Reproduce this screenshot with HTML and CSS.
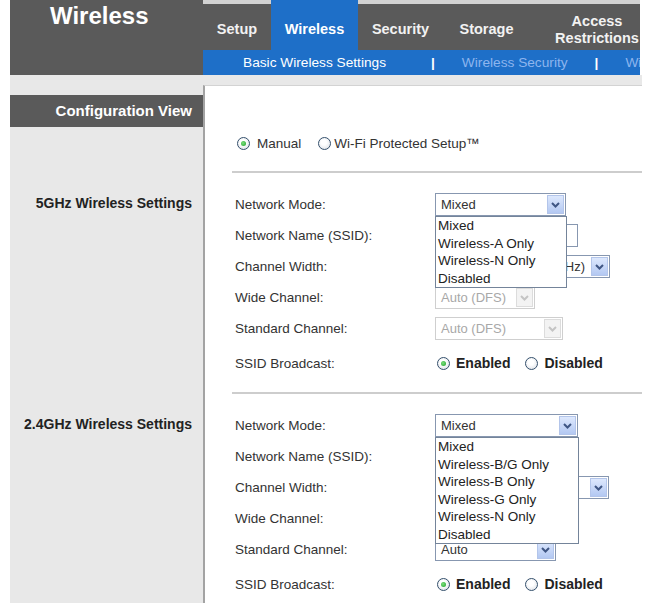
FILE: index.html
```html
<!DOCTYPE html>
<html lang="en">
<head>
<meta charset="utf-8">
<title>Wireless - Basic Wireless Settings</title>
<link rel="stylesheet" href="styles.css">
</head>
<body>
<div class="page">
  <header class="top">
    <div class="brand">Wireless</div>
    <nav class="nav">
      <div class="tabs">
        <div class="tab t-setup">Setup</div>
        <div class="tab t-wireless active">Wireless</div>
        <div class="tab t-security">Security</div>
        <div class="tab t-storage">Storage</div>
        <div class="tab t-access">Access<br>Restrictions</div>
      </div>
      <div class="subnav">
        <span class="sub current">Basic Wireless Settings</span>
        <span class="pipe">|</span>
        <span class="sub">Wireless Security</span>
        <span class="pipe">|</span>
        <span class="sub">Wireless MAC Filter</span>
      </div>
    </nav>
  </header>

  <div class="layout">
    <div class="side side-top"><div class="config">Configuration View</div></div>
    <div class="main main-top">
      <div class="mode-block">
        <div class="mode-row">
          <span class="radio on m-first"></span><span class="mode-text">Manual</span>
          <span class="radio m-second"></span><span class="mode-text wps">Wi-Fi Protected Setup™</span>
        </div>
      </div>
    </div>

    <div class="side"><div class="sec-label">5GHz Wireless Settings</div></div>
    <div class="main">
      <div class="section">
        <div class="row">
          <div class="label">Network Mode:</div>
          <div class="ctl">
            <div class="sel w131"><span class="val">Mixed</span><span class="btn"><svg width="9" height="6" viewBox="0 0 9 6"><path d="M1 1 L4.5 4.5 L8 1" fill="none" stroke="#3f5684" stroke-width="2"/></svg></span></div>
            <div class="list w132">
              <div class="opt">Mixed</div>
              <div class="opt">Wireless-A Only</div>
              <div class="opt">Wireless-N Only</div>
              <div class="opt">Disabled</div>
            </div>
          </div>
        </div>
        <div class="row">
          <div class="label">Network Name (SSID):</div>
          <div class="ctl"><div class="txt w143"></div></div>
        </div>
        <div class="row">
          <div class="label">Channel Width:</div>
          <div class="ctl">
            <div class="sel w175"><span class="val val-end">Auto (20MHz or 40MHz)</span><span class="btn"><svg width="9" height="6" viewBox="0 0 9 6"><path d="M1 1 L4.5 4.5 L8 1" fill="none" stroke="#3f5684" stroke-width="2"/></svg></span></div>
          </div>
        </div>
        <div class="row">
          <div class="label">Wide Channel:</div>
          <div class="ctl">
            <div class="sel dis w100"><span class="val">Auto (DFS)</span><span class="btn"><svg width="9" height="6" viewBox="0 0 9 6"><path d="M1 1 L4.5 4.5 L8 1" fill="none" stroke="#c4c4c4" stroke-width="2"/></svg></span></div>
          </div>
        </div>
        <div class="row">
          <div class="label">Standard Channel:</div>
          <div class="ctl">
            <div class="sel dis w128"><span class="val">Auto (DFS)</span><span class="btn"><svg width="9" height="6" viewBox="0 0 9 6"><path d="M1 1 L4.5 4.5 L8 1" fill="none" stroke="#c4c4c4" stroke-width="2"/></svg></span></div>
          </div>
        </div>
        <div class="row ssid">
          <div class="label">SSID Broadcast:</div>
          <div class="ctl opts">
            <span class="radio on"></span><span class="opt-text">Enabled</span>
            <span class="radio"></span><span class="opt-text">Disabled</span>
          </div>
        </div>
      </div>
    </div>

    <div class="side"><div class="sec-label">2.4GHz Wireless Settings</div></div>
    <div class="main">
      <div class="section last">
        <div class="row">
          <div class="label">Network Mode:</div>
          <div class="ctl">
            <div class="sel w143"><span class="val">Mixed</span><span class="btn"><svg width="9" height="6" viewBox="0 0 9 6"><path d="M1 1 L4.5 4.5 L8 1" fill="none" stroke="#3f5684" stroke-width="2"/></svg></span></div>
            <div class="list w144">
              <div class="opt">Mixed</div>
              <div class="opt">Wireless-B/G Only</div>
              <div class="opt">Wireless-B Only</div>
              <div class="opt">Wireless-G Only</div>
              <div class="opt">Wireless-N Only</div>
              <div class="opt">Disabled</div>
            </div>
          </div>
        </div>
        <div class="row">
          <div class="label">Network Name (SSID):</div>
          <div class="ctl"><div class="txt w143"></div></div>
        </div>
        <div class="row">
          <div class="label">Channel Width:</div>
          <div class="ctl">
            <div class="sel w174"><span class="val"></span><span class="btn"><svg width="9" height="6" viewBox="0 0 9 6"><path d="M1 1 L4.5 4.5 L8 1" fill="none" stroke="#3f5684" stroke-width="2"/></svg></span></div>
          </div>
        </div>
        <div class="row">
          <div class="label">Wide Channel:</div>
          <div class="ctl">
            <div class="sel dis w100"><span class="val"></span><span class="btn"><svg width="9" height="6" viewBox="0 0 9 6"><path d="M1 1 L4.5 4.5 L8 1" fill="none" stroke="#c4c4c4" stroke-width="2"/></svg></span></div>
          </div>
        </div>
        <div class="row">
          <div class="label">Standard Channel:</div>
          <div class="ctl">
            <div class="sel w121"><span class="val">Auto</span><span class="btn"><svg width="9" height="6" viewBox="0 0 9 6"><path d="M1 1 L4.5 4.5 L8 1" fill="none" stroke="#3f5684" stroke-width="2"/></svg></span></div>
          </div>
        </div>
        <div class="row ssid">
          <div class="label">SSID Broadcast:</div>
          <div class="ctl opts">
            <span class="radio on"></span><span class="opt-text">Enabled</span>
            <span class="radio"></span><span class="opt-text">Disabled</span>
          </div>
        </div>
      </div>
    </div>
  </div>
</div>
</body>
</html>
```

FILE: styles.css
```css
html, body {
  margin: 0;
  padding: 0;
  height: 603px;
  overflow: hidden;
  background: #fff;
  font-family: "Liberation Sans", Arial, sans-serif;
}

.page {
  padding-left: 10px;
}

/* ---------- header ---------- */
.top {
  display: flex;
  width: 630px;
  height: 75px;
}

.brand {
  width: 193px;
  flex-shrink: 0;
  background: #5a5a5a;
  color: #fff;
  font-weight: bold;
  font-size: 24px;
  line-height: 24px;
  padding: 4px 0 0 40px;
  box-sizing: border-box;
}

.nav {
  width: 437px;
  overflow: hidden;
  display: flex;
  flex-direction: column;
}

.tabs {
  display: flex;
  height: 50px;
  background: #5a5a5a;
}

.tab {
  flex-shrink: 0;
  box-sizing: border-box;
  border-top: 4px solid #d2d2d2;
  padding-top: 5px;
  display: flex;
  align-items: center;
  justify-content: center;
  text-align: center;
  color: #f2f2f2;
  font-weight: bold;
  font-size: 14.5px;
  line-height: 17px;
}

.tab.active {
  background: #1e6fc8;
  border-top-color: #1e6fc8;
  color: #fff;
}

.t-setup { width: 68px; }
.t-wireless { width: 87px; }
.t-security { width: 85px; }
.t-storage { width: 87px; }
.t-access { width: 134px; }

.subnav {
  height: 25px;
  background: #1e6fc8;
  display: flex;
  align-items: center;
  padding-left: 40px;
  white-space: nowrap;
  font-size: 13.7px;
}

.sub {
  color: #8db5ee;
}

.sub.current {
  color: #fff;
  margin-right: 18px;
}

.pipe {
  color: #fff;
  font-weight: bold;
  margin: 0 27px;
}

/* ---------- body layout ---------- */
.layout {
  display: grid;
  grid-template-columns: 193px 439px;
  background: #e8e8e8;
  width: 632px;
}

.side-top {
  padding-top: 20px;
}

.config {
  height: 32px;
  background: #5a5a5a;
  color: #fff;
  font-weight: bold;
  font-size: 15px;
  line-height: 32px;
  text-align: right;
  padding-right: 11px;
}

.main {
  background: #fff;
  border-left: 2px solid #a3a3a3;
  padding-left: 27px;
  padding-right: 0;
}

.main-top {
  margin-top: 10px;
  border-top: 1px solid #d3d3d3;
}

.mode-block {
  padding-top: 49px;
  padding-bottom: 20px;
  border-bottom: 2px solid #cdcdcd;
}

.mode-row {
  display: flex;
  align-items: center;
  height: 16px;
  font-size: 13.5px;
  color: #333;
}

.m-first { margin-left: 5px; margin-right: 7px; }
.m-second { margin-left: 17px; margin-right: 3px; }

/* ---------- sections ---------- */
.sec-label {
  padding-top: 15px;
  line-height: 31px;
  text-align: right;
  padding-right: 11px;
  font-weight: bold;
  font-size: 14px;
  color: #222;
}

.section {
  padding: 16px 0 12px 3px;
  border-bottom: 2px solid #cdcdcd;
}

.section.last {
  border-bottom: none;
}

.row {
  display: flex;
  align-items: center;
  height: 31px;
}

.row.ssid {
  height: 34px;
  margin-top: 2px;
}

.label {
  width: 200px;
  flex-shrink: 0;
  font-size: 13.5px;
  color: #333;
}

.ctl {
  position: relative;
}

/* select boxes */
.sel {
  display: flex;
  align-items: center;
  box-sizing: border-box;
  height: 23px;
  border: 1px solid #8797b0;
  background: #fff;
  font-size: 13px;
  color: #333;
}

.sel .val {
  flex: 1;
  padding-left: 5px;
  white-space: nowrap;
  overflow: hidden;
}

.sel .val-end {
  padding-left: 0;
  padding-right: 6px;
  text-align: right;
}

.sel .btn {
  width: 17px;
  height: 19px;
  margin-right: 1px;
  box-sizing: border-box;
  border: 1px solid #b3c5ea;
  background: linear-gradient(#dde8fd, #b3c8f2);
  display: flex;
  align-items: center;
  justify-content: center;
}

.sel.dis {
  border-color: #cfcfcf;
  color: #a8a8a8;
}

.sel.dis .btn {
  border-color: #dcdcdc;
  background: #f3f3f3;
}

.w100 { width: 100px; }
.w121 { width: 121px; }
.w128 { width: 128px; }
.w131 { width: 131px; }
.w132 { width: 132px; }
.w143 { width: 143px; }
.w144 { width: 144px; }
.w174 { width: 174px; }
.w175 { width: 175px; }

.txt {
  box-sizing: border-box;
  height: 23px;
  border: 1px solid #8797b0;
  background: #fff;
}

/* open dropdown list */
.list {
  position: absolute;
  left: 0;
  top: 23px;
  z-index: 2;
  box-sizing: border-box;
  border: 1px solid #74849a;
  background: #fff;
}

.opt {
  font-size: 13.5px;
  line-height: 17.5px;
  color: #222;
  padding-left: 2px;
  white-space: nowrap;
}

/* radios */
.radio {
  display: inline-block;
  position: relative;
  flex-shrink: 0;
  box-sizing: border-box;
  width: 13px;
  height: 13px;
  border-radius: 50%;
  border: 1px solid #34506c;
  background: radial-gradient(circle at 45% 40%, #ffffff 30%, #d6dae1 100%);
}

.radio.on::after {
  content: "";
  position: absolute;
  left: 3px;
  top: 3px;
  width: 5px;
  height: 5px;
  border-radius: 50%;
  background: radial-gradient(circle at 40% 40%, #7be07b, #1f9e2a);
}

.opts {
  display: flex;
  align-items: center;
  margin-left: 2px;
}

.opts .radio {
  margin-right: 6px;
}

.opt-text {
  font-weight: bold;
  font-size: 14px;
  color: #222;
  margin-right: 15px;
}
```
